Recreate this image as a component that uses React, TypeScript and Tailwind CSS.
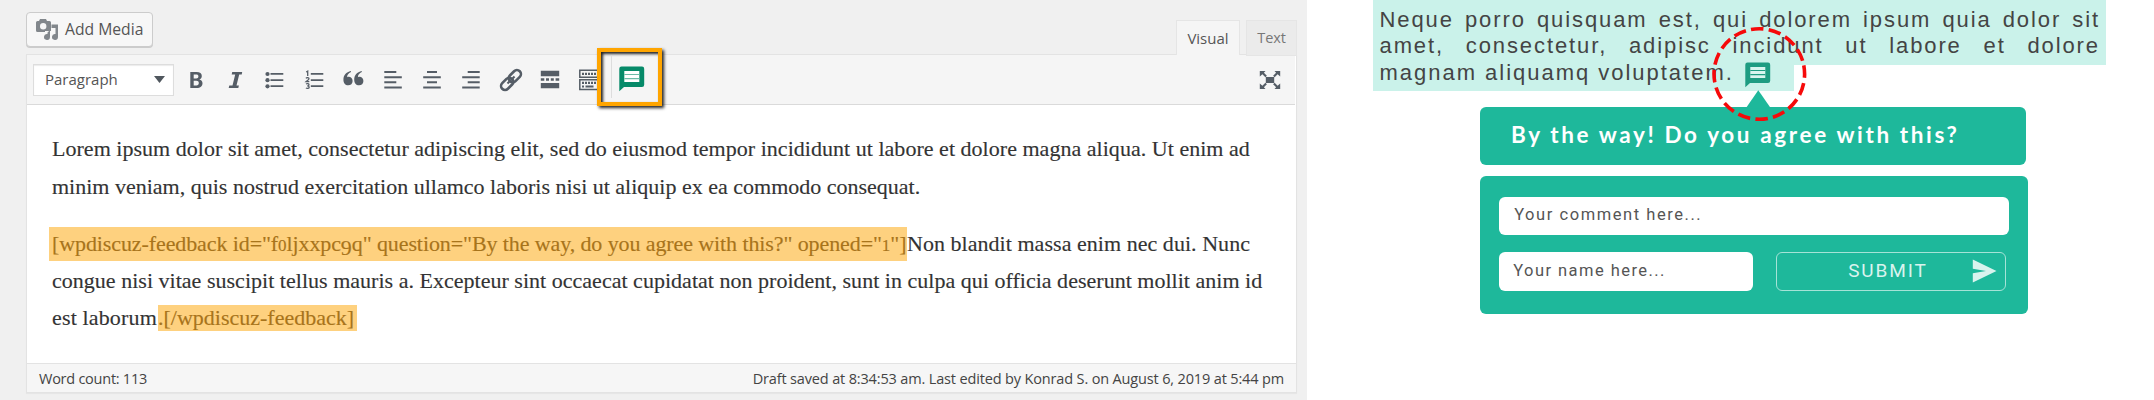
import { type ReactNode } from "react";

const cell = "flex w-[39.4px] shrink-0 justify-center";

function Ico({ children }: { children: ReactNode }) {
  return (
    <span className={cell}>
      <svg width="24" height="24" viewBox="0 0 24 24" fill="#555d66" stroke="none">
        {children}
      </svg>
    </span>
  );
}

function Comment({ color, line, stripe }: { color: string; line: string; stripe: string }) {
  return (
    <svg width="26" height="26" viewBox="0 0 26 26">
      <path fill={color} d="M2.5 0.5h20.5a2.2 2.2 0 0 1 2.2 2.2v16a2.2 2.2 0 0 1-2.2 2.2H5L.3 25.3V2.7A2.2 2.2 0 0 1 2.5.5z" />
      <path fill={line} d="M5.3 5h15v11h-15z" />
      <path fill={stripe} d="M5.3 8h15v1h-15zM5.3 12h15v1.2h-15z" />
    </svg>
  );
}

export default function App() {
  return (
    <div className="flex h-[400px] w-[2154px] overflow-hidden bg-white">
      <section className="h-[400px] w-[1307px] shrink-0 bg-[#f0f0f0] pl-[26px] font-['Open_Sans',sans-serif] text-[#555]">
        <div className="flex h-[54px] w-[1271px] items-start justify-between">
          <button className="mt-[12px] flex h-[35px] w-[127px] items-center rounded-[4px] border border-[#ccc] bg-[#f7f7f7] pl-[9px] shadow-[0_1px_0_#ccc]">
            <svg width="23" height="23" viewBox="0 0 23 23" fill="#82878c">
              <path fillRule="evenodd" d="M1.5 3H3l1-2h6l1 2h2.5A1.5 1.5 0 0 1 15 4.5v8a1.5 1.5 0 0 1-1.500 1.500h-12A1.500 1.500 0 0 1 0 12.500v-8A1.500 1.500 0 0 1 1.500 3zM7.200 5a3.200 3.200 0 1 0 0 6.400 3.200 3.200 0 0 0 0-6.400z" />
              <path d="M9 13h6v2H9z" fill="#f7f7f7" />
              <path d="M15.500 6.500H22v12.500a3 3 0 1 1-2.500-3V10h-4z" />
              <path d="M14 12v7a3 3 0 1 1-2.500-3v-1.500z" />
            </svg>
            <span className="ml-[6px] text-[15.700px] whitespace-nowrap">Add Media</span>
          </button>
          <div className="flex pt-[20px]">
            <div className="z-10 flex h-[35px] w-[64px] items-center justify-center border border-b-0 border-[#e5e5e5] bg-[#f5f5f5] text-[15px] text-[#555]">
              Visual
            </div>
            <div className="z-10 ml-[6px] flex h-[36px] w-[51px] items-center justify-center border border-[#e5e5e5] bg-[#ebebeb] text-[14.500px] tracking-[-0.1px] text-[#777]">
              Text
            </div>
          </div>
        </div>

        <div className="h-[339px] w-[1271px] border border-[#e3e3e3] bg-white shadow-[0_1px_1px_rgba(0,0,0,0.04)]">
          <div className="relative flex h-[50px] w-[1268px] items-center border-b border-[#dadada] bg-[#f5f5f5] pl-[6px]">
            <div className="flex h-[32px] w-[141px] items-center justify-between border border-[#ddd] bg-white pr-[8px] pl-[11px] shadow-[inset_0_1px_1px_rgba(0,0,0,0.08)]">
              <span className="text-[15px] text-[#555]">Paragraph</span>
              <svg width="11" height="7" viewBox="0 0 11 7" fill="#50575e"><path d="M0 0h11L5.500 7z" /></svg>
            </div>
            <div className="ml-[2px] flex items-center">
              <Ico><path fillRule="evenodd" d="M6.300 4h6.200c3.500 0 5.300 1.400 5.300 4 0 1.700-.9 2.900-2.500 3.400 2 .4 3.200 1.700 3.200 3.800 0 3-2.100 4.800-5.700 4.800H6.300zm3.400 2.500v3.900h2.500c1.400 0 2.200-.7 2.200-2 0-1.300-.8-1.900-2.300-1.900zm0 6.300v4.600h2.700c1.600 0 2.400-.8 2.400-2.300 0-1.600-.9-2.300-2.500-2.300z" /></Ico>
              <Ico><path d="M9.200 4h10l-.5 2.400h-2.500l-2.700 11.200h2.400l-.6 2.400H5.700l.6-2.400h3.200l2.700-11.200H8.700z" /></Ico>
              <Ico><circle cx="5.500" cy="6" r="2.100" /><circle cx="5.500" cy="12.200" r="2.100" /><circle cx="5.500" cy="18.300" r="2.100" /><path d="M8.500 5h12.800v1.800H8.500zM8.500 11.200h12.800V13H8.500zM8.500 17.300h12.800v1.800H8.500z" /></Ico>
              <Ico><path d="M8.800 5h12.500v1.800H8.800zM8.800 11.200h12.500V13H8.800zM8.800 17.300h12.500v1.800H8.800z" /><path fill="none" stroke="#555d66" strokeWidth="1.300" d="M4.200 4l1.500-.9v5M4 10.300c.5-.8 3-.9 3 .5 0 1-2 1.900-3 2.900h3.300M4 16c1-.6 3-.5 3 .7 0 .8-.8 1.200-1.800 1.200 1.100 0 2 .4 2 1.300 0 1.300-2.200 1.400-3.300.8" /></Ico>
              <Ico><g transform="translate(-.6 -.9) scale(1.08)"><path d="M9.800 4.600C7.400 5.600 6.200 7.300 6.200 9.300c.4-.2.900-.3 1.400-.3 2.200 0 3.700 1.600 3.700 3.900 0 2.400-1.700 4-4 4-2.800 0-4.500-2-4.500-5.200 0-4 2.500-7 7-8zM19.800 4.600c-2.400 1-3.600 2.700-3.600 4.700.4-.2.900-.3 1.400-.3 2.200 0 3.700 1.600 3.700 3.900 0 2.400-1.700 4-4 4-2.800 0-4.500-2-4.500-5.200 0-4 2.500-7 7-8z" /></g></Ico>
              <Ico><path d="M3.300 3h12v2h-12zM3.300 8.200h17.500v2H3.300zM3.300 13.300h12v2h-12zM3.300 18.400h17.500v2H3.300z" /></Ico>
              <Ico><path d="M7 3h10v2H7zM3.200 8.200h17.600v2H3.200zM7 13.300h10v2H7zM3.200 18.400h17.600v2H3.200z" /></Ico>
              <Ico><path d="M8.700 3h12v2h-12zM3.200 8.200h17.500v2H3.200zM8.700 13.300h12v2h-12zM3.200 18.400h17.500v2H3.200z" /></Ico>
              <Ico><g fill="none" stroke="#555d66" strokeWidth="2.600" transform="rotate(-45 12 12)"><rect x="-.4" y="8" width="14" height="8" rx="4" /><rect x="10.400" y="8" width="14" height="8" rx="4" /><path d="M7 12h10" strokeWidth="2" /></g></Ico>
              <Ico><path d="M2.800 2.800h18.400v5.400H2.800zM2.800 10.300h3.500v2.400H2.800zM8 10.300h3v2.400H8zM12.800 10.300h3v2.400h-3zM17.600 10.300h3.600v2.400h-3.600zM2.800 14.900h18.400v5.400H2.800z" /></Ico>
              <Ico><path fill="none" stroke="#555d66" strokeWidth="1.500" d="M1.800 2.200h21v7h-21zM1.800 11.800h21V21.500h-21z" /><path d="M4 4.800h2v2.200H4zM7 4.800h2v2.200H7zM10 4.800h2v2.200h-2zM13 4.800h2v2.200h-2zM16 4.800h2v2.200h-2zM4 13.800h2V16H4zM7 13.800h2V16H7zM10 13.800h2V16h-2zM13 13.800h2V16h-2zM16 13.800h2V16h-2zM4 17.500h2v2H4zM7.500 17.500h8v2h-8z" /></Ico>
            </div>
            <div className="absolute top-[-7px] left-[570px] flex h-[58px] w-[65px] items-center border-4 border-[#ffa500] bg-[#f5f5f5] shadow-[2px_2px_3px_#222,inset_2px_2px_3px_#222]">
              <span className="ml-[10px] h-[42px] w-px bg-[#ddd]" />
              <span className="mt-[3px] ml-[7px]"><Comment color="#068a69" line="#fff" stripe="#6dbba7" /></span>
            </div>
            <svg className="mr-[14px] ml-auto" width="22" height="20" viewBox="0 0 22 20" fill="#555d66">
              <path d="M6.800 7h8.400v6H6.800zM.8 1h5.700L4.900 2.700l3 3-1.500 1.500-3-3L.8 6.500zM21.200 1h-5.700l1.600 1.700-3 3 1.500 1.500 3-3 2.600 2.300zM.8 19h5.700l-1.600-1.700 3-3-1.500-1.500-3 3L.8 13.500zM21.200 19h-5.700l1.600-1.700-3-3 1.500-1.500 3 3 2.600-2.300z" />
            </svg>
          </div>

          <div className="h-[258px] pt-[25px] pl-[25px] font-['Liberation_Serif',serif] text-[22px] whitespace-nowrap text-[#333] [-webkit-text-stroke:0.15px]">
            <p className="h-[38px] leading-[38px] tracking-[0.03px]">Lorem ipsum dolor sit amet, consectetur adipiscing elit, sed do eiusmod tempor incididunt ut labore et dolore magna aliqua. Ut enim ad</p>
            <p className="h-[38px] leading-[38px]">minim veniam, quis nostrud exercitation ullamco laboris nisi ut aliquip ex ea commodo consequat.</p>
            <div className="mt-[19px]">
              <p className="flex h-[37.300px] items-center leading-[34px]">
                <span className="-ml-[3px] h-[34px] w-[858px] bg-[#fed17f] pl-[3px] tracking-[-0.1px] text-[#a8741b]">[wpdiscuz-feedback id="f<span className="text-[17px]">0</span>ljxxpc<span className="inline-block translate-y-[4px] leading-none">9</span>q" question="By the way, do you agree with this?" opened="<span className="text-[17px]">1</span>"]</span>
                <span className="tracking-[0.040px]">Non blandit massa enim nec dui. Nunc</span>
              </p>
              <p className="h-[37.300px] leading-[37.300px] tracking-[0.020px]">congue nisi vitae suscipit tellus mauris a. Excepteur sint occaecat cupidatat non proident, sunt in culpa qui officia deserunt mollit anim id</p>
              <p className="flex h-[37.300px] items-center leading-[26px]">
                <span className="w-[106px] tracking-[0.150px]">est laborum</span>
                <span className="h-[26px] w-[199px] bg-[#fed17f] text-[#a8741b]">.[/wpdiscuz-feedback]</span>
              </p>
            </div>
          </div>

          <div className="flex h-[29px] items-center justify-between border-t border-[#e3e3e3] bg-[#f6f6f6] px-[12px] pt-px text-[14.500px] text-[#444]">
            <span className="tracking-[-0.250px]">Word count: 113</span>
            <span className="tracking-[-0.150px]">Draft saved at 8:34:53 am. Last edited by Konrad S. on August 6, 2019 at 5:44 pm</span>
          </div>
        </div>
      </section>

      <section className="relative w-[847px]">
        <div className="ml-[66px] flex h-[65px] w-[733px] flex-col bg-[#caf2ea] pt-[7px] pr-[6px] pl-[6.500px] font-['Liberation_Sans',sans-serif] text-[22px] leading-[26px] tracking-[1.900px] text-[#444]">
          <p className="flex justify-between">{["Neque", "porro", "quisquam", "est,", "qui", "dolorem", "ipsum", "quia", "dolor", "sit"].map((w) => <span key={w}>{w}</span>)}</p>
          <p className="flex justify-between">{["amet,", "consectetur,", "adipisc", "incidunt", "ut", "labore", "et", "dolore"].map((w) => <span key={w}>{w}</span>)}</p>
        </div>
        <div className="ml-[66px] flex h-[25.500px] w-[420.500px] items-end bg-[#caf2ea] pl-[6.500px] font-['Liberation_Sans',sans-serif] text-[22px] leading-[26px] tracking-[1.980px] text-[#444]">
          <span className="-mt-[6px] mb-[4.500px]">magnam aliquamq voluptatem.</span>
          <span className="mb-[3px] ml-[11.500px] leading-none"><Comment color="#1e9c82" line="#d8f5ef" stripe="#1e9c82" /></span>
        </div>
        <div className="mt-[16.500px] ml-[173px] flex h-[57.500px] w-[546px] items-center rounded-[6px] bg-[#1eb89b] pb-[2px] pl-[31px] font-['Lato',sans-serif] text-[22.500px] font-bold tracking-[2.620px] whitespace-nowrap text-white">
          By the way! Do you agree with this?
        </div>
        <div className="mt-[11.500px] ml-[173px] h-[138px] w-[547.500px] rounded-[6px] bg-[#1eb89b] px-[18.700px] pt-[20.500px] font-['Roboto',sans-serif] text-[#555]">
          <div className="flex h-[38.500px] w-[510px] items-center rounded-[6px] bg-white pl-[15.500px] text-[16.500px] tracking-[1.550px]">
            Your comment here...
          </div>
          <div className="mt-[17px] flex">
            <div className="flex h-[38.500px] w-[254.500px] items-center rounded-[6px] bg-white pl-[14.500px] text-[16.500px] tracking-[1.450px]">
              Your name here...
            </div>
            <button className="ml-[23px] flex h-[38.500px] w-[230px] items-center rounded-[6px] border border-[#a5e3d7] pl-[71px] text-[19px] text-[#d9f3ee]">
              <span className="tracking-[1.900px]">SUBMIT</span>
              <svg className="mr-[8px] ml-auto" width="25" height="24" viewBox="0 0 25 24" fill="#d9f3ee"><path d="M.8.500L24.500 12 .8 23.500V14.300L14 12 .8 9.700z" /></svg>
            </button>
          </div>
        </div>
        <svg className="absolute top-[20px] left-[393px]" width="120" height="110" viewBox="0 0 120 110">
          <path fill="#1eb89b" d="M58.300 70.300l12.500 18H45.800z" />
          <circle cx="59.300" cy="54" r="45.300" fill="none" stroke="#f60a0a" strokeWidth="3.600" strokeDasharray="12.500 5.290" transform="rotate(-11 59.300 54)" />
        </svg>
      </section>
    </div>
  );
}
